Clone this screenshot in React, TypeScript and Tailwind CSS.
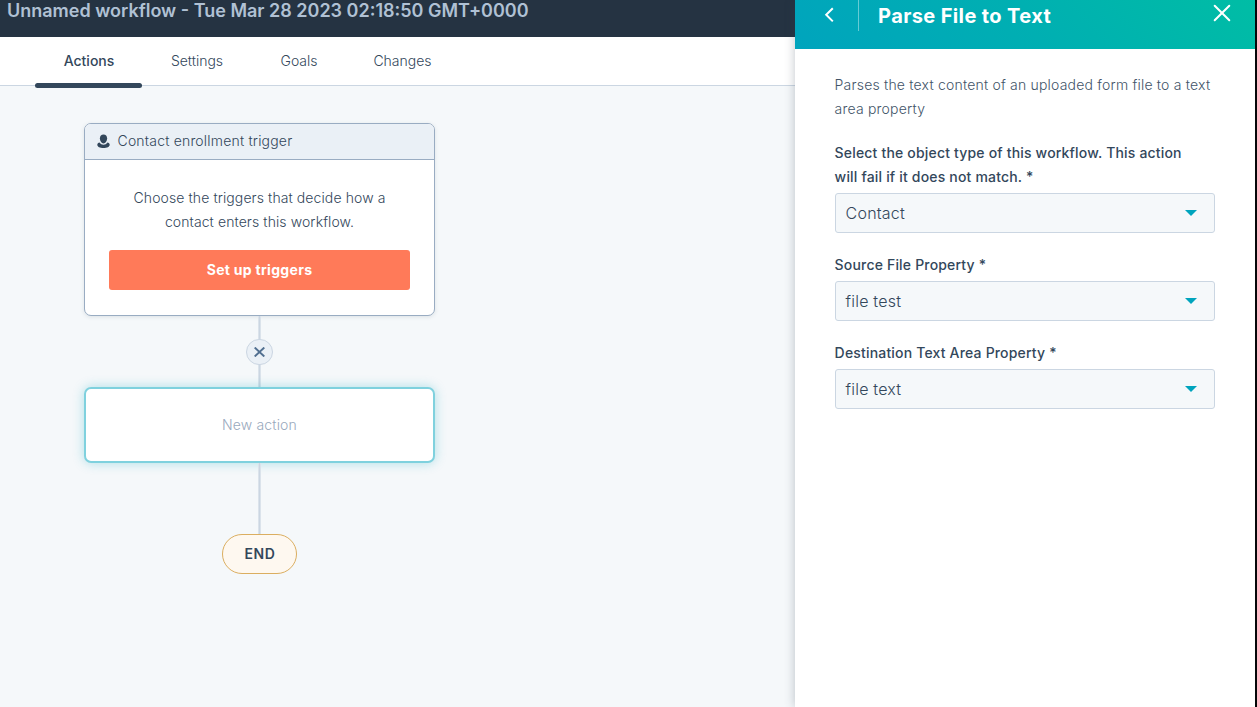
const tabs = [
  { name: 'Actions', className: 'w-[106px] font-medium' },
  { name: 'Settings', className: 'w-[110px]' },
  { name: 'Goals', className: 'w-[94px]' },
  { name: 'Changes', className: 'w-[113px]' },
];

const fields = [
  { label: 'Select the object type of this workflow. This action will fail if it does not match. *', value: 'Contact' },
  { label: 'Source File Property *', value: 'file test' },
  { label: 'Destination Text Area Property *', value: 'file text' },
];

function ContactIcon() {
  return (
    <svg width="13" height="15" viewBox="0 0 13 15" fill="#33475b">
      <path d="M6.5 0.4C4.3 0.4 2.9 1.9 2.9 4.3C2.9 6.9 4.5 9.5 6.5 9.5C8.5 9.5 10.1 6.9 10.1 4.3C10.1 1.9 8.7 0.4 6.5 0.4Z" />
      <path d="M2.6 8.5C1.2 8.9 0.3 9.7 0.3 10.7C0.3 12.7 2.9 14 6.5 14C10.1 14 12.7 12.7 12.7 10.7C12.7 9.7 11.8 8.9 10.4 8.5C9.4 10 8.1 10.7 6.5 10.7C4.9 10.7 3.6 10 2.6 8.5Z" />
    </svg>
  );
}

function Connector({ className }: { className: string }) {
  return <div className={`w-[3px] border-x border-[#dbe3eb] bg-[#cbd6e2] ${className}`} />;
}

function TopBar() {
  return (
    <header className="h-[37px] bg-[#253342] pl-[7px]">
      <h1 className="text-[18px] leading-[22px] font-semibold text-[#b0c1d4] whitespace-nowrap">
        Unnamed workflow - Tue Mar 28 2023 02:18:50 GMT+0000
      </h1>
    </header>
  );
}

function TabBar() {
  return (
    <nav className="flex h-[49px] border-b border-[#cbd6e2] bg-white pl-9">
      {tabs.map((tab, i) => (
        <button key={tab.name} className={`relative h-[48px] text-center text-sm ${tab.className}`}>
          {tab.name}
          {i === 0 && <span className="absolute -bottom-[3px] -left-px h-[5px] w-[107px] rounded-full bg-[#33475b]" />}
        </button>
      ))}
    </nav>
  );
}

function Canvas() {
  return (
    <div className="flex flex-1 items-start bg-[#f5f8fa] pt-[37px] pl-[84px]">
      <div className="flex w-[351px] flex-col items-center">
        <section className="h-[193px] w-full overflow-hidden rounded-[7px] border border-[#99acc2] bg-white shadow-[0_1px_4px_rgba(45,62,80,0.12)]">
          <div className="flex h-9 items-center gap-[7.5px] border-b border-[#99acc2] bg-[#eaf0f6] pl-3">
            <ContactIcon />
            <span className="pb-px text-sm tracking-[0.19px]">Contact enrollment trigger</span>
          </div>
          <div className="px-6 pt-[26px] text-center">
            <p className="text-sm leading-6 tracking-[0.1px]">
              Choose the triggers that decide how a
              <br />
              contact enters this workflow.
            </p>
            <button className="mt-4 h-10 w-full rounded-[3px] bg-[#ff7a59] text-sm font-bold tracking-[0.3px] text-white">
              Set up triggers
            </button>
          </div>
        </section>
        <Connector className="h-[23px]" />
        <button className="flex h-[26px] w-[27px] items-center justify-center rounded-full border border-[#cbd6e2] bg-[#eaf0f6]">
          <svg width="11" height="10" viewBox="0 0 11 10" fill="none" stroke="#516f90" strokeWidth="1.9">
            <path d="M0.7 0.5L10.3 9.5M10.3 0.5L0.7 9.5" />
          </svg>
        </button>
        <Connector className="h-[22px]" />
        <div className="flex h-[76px] w-full items-center justify-center rounded-[7px] border-2 border-[#7fd1de] bg-white text-sm tracking-[0.15px] text-[#99a9bd] shadow-[0_0_12px_rgba(0,164,189,0.3)]">
          New action
        </div>
        <Connector className="h-[71px]" />
        <div className="flex h-10 w-[75px] items-center justify-center rounded-full border border-[#dbae60] bg-[#fef8f0] pl-px text-sm font-semibold tracking-[0.6px]">
          END
        </div>
      </div>
    </div>
  );
}

function SidePanel() {
  return (
    <aside className="z-10 flex w-[460px] shrink-0 flex-col bg-white shadow-[0_0_10px_rgba(45,62,80,0.3)]">
      <header className="flex h-[49px] items-start bg-[linear-gradient(45deg,#00a4bd,#00afb2_50%,#00bda5)] pl-[29px] text-white">
        <svg className="mt-[7px]" width="11" height="16" viewBox="0 0 11 16" fill="none" stroke="white" strokeWidth="2">
          <path d="M8.8 1.2L2.2 7.8L8.8 14.4" />
        </svg>
        <div className="ml-[23.5px] h-[31px] w-px bg-white/40" />
        <h2 className="ml-[19px] text-xl leading-8 font-bold tracking-[0.38px]">Parse File to Text</h2>
        <svg className="mt-[4px] mr-[24px] ml-auto" width="18" height="18" viewBox="0 0 18 18" fill="none" stroke="white" strokeWidth="2" strokeLinecap="round">
          <path d="M1.7 1.7L16.3 16.3M16.3 1.7L1.7 16.3" />
        </svg>
      </header>
      <div className="pt-6 pr-10 pl-10">
        <p className="mb-5 text-sm leading-6 tracking-[0.2px] whitespace-nowrap text-[#425468]">
          Parses the text content of an uploaded form file to a text
          <br />
          area property
        </p>
        {fields.map((field) => (
          <div key={field.label} className="mb-5">
            <label className="block pr-6 text-sm leading-6 font-medium tracking-[0.18px]">{field.label}</label>
            <button className="mt-1 flex h-10 w-full items-center justify-between rounded-[3px] border border-[#cbd6e2] bg-[#f5f8fa] pr-[17px] pl-2.5 text-base tracking-[0.2px]">
              {field.value}
              <svg width="12" height="6" viewBox="0 0 12 6" fill="#00a4bd">
                <path d="M0 0H12L6 6Z" />
              </svg>
            </button>
          </div>
        ))}
      </div>
    </aside>
  );
}

export default function App() {
  return (
    <div className="flex h-screen overflow-hidden bg-black pr-[2.4px] font-['Inter',sans-serif] font-light text-[#33475b]">
      <main className="flex min-w-0 flex-1 flex-col">
        <TopBar />
        <TabBar />
        <Canvas />
      </main>
      <SidePanel />
    </div>
  );
}
